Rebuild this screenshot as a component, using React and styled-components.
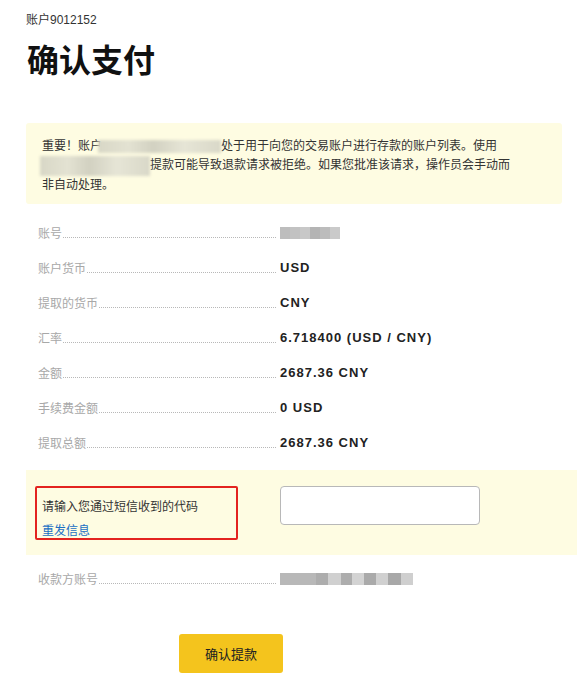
import React from 'react';
import styled, { createGlobalStyle } from 'styled-components';

const GlobalStyle = createGlobalStyle`
  html, body { margin: 0; padding: 0; background: #fff; }
  body {
    font-family: "Liberation Sans", "Noto Sans CJK SC", sans-serif;
    color: #333;
  }
`;

const Page = styled.div`
  width: 577px;
  padding: 13px 0 0 26px;
  box-sizing: border-box;
`;

const Account = styled.div`
  font-size: 12px;
  line-height: 14px;
  color: #333;
`;

const Title = styled.h1`
  margin: 14px 0 0 1px;
  font-size: 32px;
  line-height: 40px;
  font-weight: 700;
  color: #111;
`;

const Notice = styled.div`
  margin-top: 42px;
  width: 536px;
  box-sizing: border-box;
  padding: 14px 16px 9px;
  background: #fefce2;
  border-radius: 3px;
  font-size: 12px;
  line-height: 19px;
  color: #333;
`;

const Blur = styled.span`
  display: inline-block;
  vertical-align: middle;
  width: ${p => p.w}px;
  height: ${p => p.h}px;
  margin-left: ${p => p.ml || 0}px;
  background: linear-gradient(90deg, #d8d7c6 0%, #e3e2d2 25%, #d2d1c1 45%, #e6e5d6 70%, #d9d8c8 100%);
  filter: blur(1.5px);
`;

const Rows = styled.div`
  margin-top: 11px;
`;

const Row = styled.div`
  display: flex;
  align-items: center;
  height: 35px;
  padding-left: 12px;
`;

const Label = styled.div`
  width: 242px;
  display: flex;
  align-items: flex-end;
  font-size: 12px;
  color: #a8a8a8;
  padding-right: 4px;
  box-sizing: border-box;
  &::after {
    content: '';
    flex: 1;
    border-bottom: 1px dotted #b8b8b8;
    margin: 0 0 3px 1px;
  }
`;

const Value = styled.div`
  font-size: 13px;
  font-weight: 700;
  letter-spacing: 1px;
  color: #222;
`;

const Pixels = styled.div`
  display: flex;
  height: 12px;
`;

const Pixel = styled.span`
  width: ${p => p.w}px;
  background: ${p => p.c};
`;

const SmsBox = styled.div`
  margin-top: 10px;
  height: 85px;
  width: 551px;
  box-sizing: border-box;
  padding: 16px 0 0 9px;
  background: #fefce2;
  display: flex;
  align-items: flex-start;
`;

const Marked = styled.div`
  width: 203px;
  height: 54px;
  box-sizing: border-box;
  border: 2px solid #e3231f;
  border-radius: 2px;
  padding: 12px 0 0 5px;
  font-size: 12px;
  line-height: 14px;
  color: #333;
`;

const Resend = styled.a`
  display: block;
  margin-top: 10px;
  color: #1b6fc4;
  text-decoration: none;
  font-size: 12px;
`;

const CodeInput = styled.input`
  margin-left: 42px;
  width: 200px;
  height: 39px;
  box-sizing: border-box;
  border: 1px solid #b8b8b8;
  border-radius: 4px;
  background: #fff;
  outline: none;
`;

const PayeeRow = styled(Row)`
  margin-top: 6px;
`;

const Button = styled.button`
  margin: 38px 0 0 153px;
  width: 104px;
  height: 39px;
  border: none;
  border-radius: 3px;
  background: #f4c41d;
  font-family: inherit;
  font-size: 13px;
  color: #222;
  cursor: pointer;
`;

const details = [
  ['账户货币', 'USD'],
  ['提取的货币', 'CNY'],
  ['汇率', '6.718400 (USD / CNY)'],
  ['金额', '2687.36 CNY'],
  ['手续费金额', '0 USD'],
  ['提取总额', '2687.36 CNY'],
];

const accountBlocks = [
  [10, '#bdbdbd'], [10, '#c2c2c2'], [10, '#c8c8c8'], [10, '#b4b4b4'], [10, '#bcbcbc'], [10, '#cacaca'],
];

const payeeBlocks = [
  [36, '#b8b8b8'], [12, '#adadad'], [13, '#d0d0d0'], [11, '#adadad'], [12, '#d3d3d3'],
  [12, '#aaaaaa'], [12, '#d0d0d0'], [13, '#a8a8a8'], [12, '#cfcfcf'],
];

function Masked({ blocks }) {
  return (
    <Pixels>
      {blocks.map(([w, c], i) => <Pixel key={i} w={w} c={c} />)}
    </Pixels>
  );
}

export default function App() {
  return (
    <Page>
      <GlobalStyle />
      <Account>账户9012152</Account>
      <Title>确认支付</Title>
      <Notice>
        重要！账户<Blur w={123} h={13} ml={-4} />处于用于向您的交易账户进行存款的账户列表。使用
        <br />
        <Blur w={110} h={20} ml={-2} />提款可能导致退款请求被拒绝。如果您批准该请求，操作员会手动而
        <br />
        非自动处理。
      </Notice>
      <Rows>
        <Row>
          <Label>账号</Label>
          <Masked blocks={accountBlocks} />
        </Row>
        {details.map(([label, value]) => (
          <Row key={label}>
            <Label>{label}</Label>
            <Value>{value}</Value>
          </Row>
        ))}
      </Rows>
      <SmsBox>
        <Marked>
          请输入您通过短信收到的代码
          <Resend href="#">重发信息</Resend>
        </Marked>
        <CodeInput type="text" />
      </SmsBox>
      <PayeeRow>
        <Label>收款方账号</Label>
        <Masked blocks={payeeBlocks} />
      </PayeeRow>
      <Button>确认提款</Button>
    </Page>
  );
}
